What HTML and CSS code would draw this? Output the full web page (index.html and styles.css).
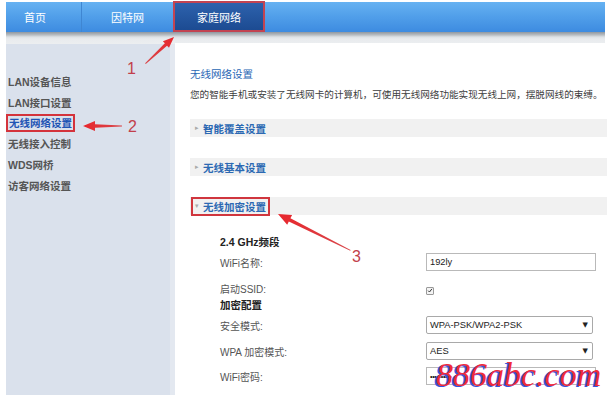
FILE: index.html
```html
<!DOCTYPE html>
<html lang="zh-CN">
<head>
<meta charset="utf-8">
<title>家庭网络 - 无线网络设置</title>
<link rel="stylesheet" href="styles.css">
</head>
<body>
<div class="page">
  <nav class="nav">
    <div class="tab tab-home">首页</div>
    <div class="tab tab-net">因特网</div>
    <div class="tab tab-active">家庭网络</div>
  </nav>
  <div class="shade"></div>
  <div class="main">
    <aside class="side">
      <div class="item"><span>LAN设备信息</span></div>
      <div class="item"><span>LAN接口设置</span></div>
      <div class="item"><span class="active">无线网络设置</span></div>
      <div class="item"><span>无线接入控制</span></div>
      <div class="item"><span>WDS网桥</span></div>
      <div class="item"><span>访客网络设置</span></div>
    </aside>
    <section class="content">
      <h1 class="title">无线网络设置</h1>
      <p class="desc">您的智能手机或安装了无线网卡的计算机，可使用无线网络功能实现无线上网，摆脱网线的束缚。</p>
      <div class="bar bar1"><span class="tri">▸</span><span class="bar-text">智能覆盖设置</span></div>
      <div class="bar bar2"><span class="tri">▸</span><span class="bar-text">无线基本设置</span></div>
      <div class="bar bar3"><span class="mark"><span class="tri">▾</span><span class="bar-text">无线加密设置</span></span></div>
      <div class="form">
        <div class="row r1"><span class="label strong">2.4 GHz频段</span></div>
        <div class="row r2"><span class="label">WiFi名称:</span><div class="field input">192ly</div></div>
        <div class="row r3"><span class="label">启动SSID:</span><span class="check"><svg viewBox="0 0 8 8" width="8" height="8"><path d="M1.5 4.2 L3.3 6 L6.6 1.8" fill="none" stroke="#333" stroke-width="1.3"/></svg></span></div>
        <div class="row r4"><span class="label strong">加密配置</span></div>
        <div class="row r5"><span class="label">安全模式:</span><div class="field select"><span>WPA-PSK/WPA2-PSK</span><span class="caret">▼</span></div></div>
        <div class="row r6"><span class="label">WPA 加密模式:</span><div class="field select"><span>AES</span><span class="caret">▼</span></div></div>
        <div class="row r7"><span class="label">WiFi密码:</span><div class="field input pwd">••••••••••</div></div>
      </div>
    </section>
  </div>
  <svg class="notes" width="607" height="395" viewBox="0 0 607 395">
    <defs>
      <linearGradient id="ag" x1="0" y1="0" x2="1" y2="0">
        <stop offset="0" stop-color="#e8262c"/>
        <stop offset="1" stop-color="#d8484c"/>
      </linearGradient>
    </defs>
    <g transform="translate(174,37) rotate(137.1)">
      <polygon fill="url(#ag)" points="0,0 11,-4.5 11,-1.6 39,-0.5 39,0.5 11,1.6 11,4.5"/>
    </g>
    <g transform="translate(83,126)">
      <polygon fill="url(#ag)" points="0,0 12,-5 12,-1.8 39,-0.5 39,0.5 12,1.8 12,5"/>
    </g>
    <g transform="translate(278,214) rotate(26.6)">
      <polygon fill="url(#ag)" points="0,0 13,-5.5 13,-1.8 81,-0.4 81,0.4 13,1.8 13,5.5"/>
    </g>
    <text class="num" x="127" y="74">1</text>
    <text class="num" x="128" y="132">2</text>
    <text class="num" x="352" y="262">3</text>
  </svg>
  <div class="watermark">886abc.com</div>
</div>
</body>
</html>
```

FILE: styles.css
```css
html, body {
  margin: 0;
  padding: 0;
  background: #ffffff;
}

body {
  font-family: "Liberation Sans", "Noto Sans CJK SC", sans-serif;
  color: #444;
}

.page {
  position: relative;
  width: 607px;
  height: 395px;
  overflow: hidden;
  padding: 2px 0 0 6px;
  box-sizing: border-box;
}

/* ---------- top navigation ---------- */
.nav {
  display: flex;
  width: 599px;
  height: 30px;
  background: linear-gradient(#66b2f2 0%, #52a0ea 45%, #3d8be0 100%);
}

.tab {
  display: flex;
  align-items: center;
  justify-content: center;
  height: 30px;
  color: #ffffff;
  font-size: 11px;
  font-family: "Noto Sans CJK SC", sans-serif;
  box-sizing: border-box;
}

.tab-home {
  width: 76px;
  padding-right: 17px;
  border-right: 1px solid #3f86d2;
}

.tab-net {
  width: 91px;
}

.tab-active {
  width: 92px;
  height: 31px;
  margin-top: -1px;
  background: linear-gradient(#2d62ad, #1c4b92);
  border: 2px solid #c24452;
}

.shade {
  width: 599px;
  height: 12px;
  background: linear-gradient(#8f979f 0px, #b9bec3 3px, #dde1e5 5px, #e8ebee 7px, #eceef0 12px);
}

/* ---------- main area ---------- */
.main {
  display: flex;
  height: 351px;
}

.side {
  width: 164px;
  flex: none;
  background: #dae1ec;
  border-right: 5px solid #e3e8f0;
  padding-top: 27px;
  box-sizing: content-box;
}

.item {
  display: flex;
  align-items: center;
  height: 20.8px;
  padding-left: 2px;
  font-size: 10.5px;
  font-weight: 700;
  color: #555555;
  font-family: "Liberation Sans", "Noto Sans CJK SC", sans-serif;
}

.item .active {
  display: inline-block;
  line-height: 14px;
  color: #1f55b5;
  outline: 2px solid #d4333c;
  outline-offset: 0px;
  padding: 0 1px;
}

.content {
  flex: 1;
  min-width: 0;
  background: #ffffff;
  padding-left: 15px;
  margin-top: -1px;
}

.title {
  margin: 23px 0 0;
  font-size: 10.5px;
  line-height: 16px;
  font-weight: 400;
  color: #2a67b5;
}

.desc {
  margin: 5px 0 0;
  font-size: 9.6px;
  line-height: 16px;
  color: #3d3d3d;
  white-space: nowrap;
}

.bar {
  display: flex;
  align-items: center;
  height: 18px;
  background: #f1f1f1;
  padding-left: 5px;
}

.bar1 { margin-top: 16px; }
.bar2 { margin-top: 21px; }
.bar3 { margin-top: 21px; }

.mark {
  display: inline-flex;
  align-items: center;
  height: 15px;
  margin-left: -2px;
  padding: 0 2px;
  outline: 2px solid #d0363e;
}

.tri {
  font-size: 7px;
  color: #aaaaaa;
  width: 8px;
  font-family: "DejaVu Sans", sans-serif;
}

.bar-text {
  font-size: 10.5px;
  font-weight: 700;
  color: #2c69b3;
  font-family: "Noto Sans CJK SC", sans-serif;
}

/* ---------- form ---------- */
.form {
  padding-left: 30px;
}

.row {
  display: flex;
  align-items: center;
  height: 20px;
}

.r1 { margin-top: 16px; }
.r2 { margin-top: 1px; }
.r3 { margin-top: 8px; height: 16px; }
.r4 { height: 16px; }
.r5 { margin-top: 3px; }
.r6 { margin-top: 6px; }
.r7 { margin-top: 5px; }

.label {
  width: 206px;
  flex: none;
  font-size: 10px;
  color: #555;
}

.label.strong {
  font-weight: 700;
  color: #222;
  font-size: 10.5px;
}

.field {
  height: 18px;
  box-sizing: border-box;
  border: 1px solid #b9b9b9;
  font-size: 9.3px;
  color: #222;
  display: flex;
  align-items: center;
  padding-left: 3px;
  background: #fff;
}

.input {
  width: 170px;
}

.select {
  width: 167px;
  justify-content: space-between;
  padding-right: 4px;
  border-radius: 2px;
  border-color: #a9a9a9;
}

.caret {
  font-size: 7px;
  color: #222;
  font-family: "DejaVu Sans", sans-serif;
}

.pwd {
  font-size: 7px;
  letter-spacing: -0.3px;
  color: #111;
}

.check {
  display: inline-flex;
  align-items: center;
  justify-content: center;
  width: 8px;
  height: 8px;
  margin-top: 5px;
  border: 1px solid #9a9a9a;
  border-radius: 1px;
  background: #f4f4f4;
  box-sizing: border-box;
}

.check svg {
  width: 7px;
  height: 7px;
}

/* ---------- annotations ---------- */
.notes {
  position: absolute;
  left: 0;
  top: 0;
  pointer-events: none;
}

.num {
  font-family: "Liberation Sans", sans-serif;
  font-size: 16px;
  fill: #c23f4b;
}

.watermark {
  position: absolute;
  left: 436px;
  top: 358px;
  font-family: "Liberation Serif", serif;
  font-style: italic;
  font-size: 34px;
  line-height: 34px;
  color: #f02a3c;
  text-shadow: -2px 1px 0 #3b52dc;
  white-space: nowrap;
}
```
